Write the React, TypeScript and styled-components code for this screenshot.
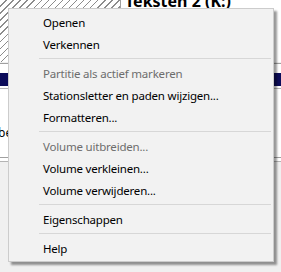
import React from 'react';
import styled, { createGlobalStyle } from 'styled-components';

const GlobalStyle = createGlobalStyle`
  html, body {
    margin: 0;
    padding: 0;
    background: #f0f0f0;
  }
  body {
    font-family: 'Noto Sans', 'Open Sans', sans-serif;
  }
`;

type Entry = { label: string; disabled?: boolean } | 'sep';

const ENTRIES: Entry[] = [
  { label: 'Openen' },
  { label: 'Verkennen' },
  'sep',
  { label: 'Partitie als actief markeren', disabled: true },
  { label: 'Stationsletter en paden wijzigen...' },
  { label: 'Formatteren...' },
  'sep',
  { label: 'Volume uitbreiden...', disabled: true },
  { label: 'Volume verkleinen...' },
  { label: 'Volume verwijderen...' },
  'sep',
  { label: 'Eigenschappen' },
  'sep',
  { label: 'Help' },
];

export default function App() {
  return (
    <>
      <GlobalStyle />
      <Screen>
        <DiskView>
          <TopRow>
            <Unallocated />
            <VolumeLabel>Teksten 2 (K:)</VolumeLabel>
          </TopRow>
          <PartitionBox>
            <PartitionHead>
              <NavyBar />
            </PartitionHead>
            <PartitionBody>
              <ClippedText>be</ClippedText>
            </PartitionBody>
          </PartitionBox>
          <BottomRule />
        </DiskView>

        <Menu>
          {ENTRIES.map((e, idx) =>
            e === 'sep' ? (
              <Separator key={idx} />
            ) : (
              <Item key={idx} disabled={e.disabled}>
                {e.label}
              </Item>
            )
          )}
        </Menu>
      </Screen>
    </>
  );
}

const Screen = styled.div`
  position: relative;
  width: 281px;
  height: 272px;
  overflow: hidden;
  background: #f0f0f0;
`;

const DiskView = styled.div`
  display: flex;
  flex-direction: column;
`;

const TopRow = styled.div`
  display: flex;
  height: 62px;
  background: #ffffff;
`;

const Unallocated = styled.div`
  width: 120px;
  border-right: 1px solid #a0a0a0;
  background: repeating-linear-gradient(
    135deg,
    #ffffff 0px,
    #ffffff 4px,
    #8c8c8c 4px,
    #8c8c8c 5px
  );
`;

const VolumeLabel = styled.div`
  flex: 1;
  padding-left: 4px;
  margin-top: -6px;
  font-family: 'Noto Sans', sans-serif;
  font-weight: bold;
  font-size: 16px;
  line-height: 15px;
  color: #000;
`;

const PartitionBox = styled.div`
  display: flex;
  flex-direction: column;
  border-top: 1px solid #a0a0a0;
  border-bottom: 1px solid #a0a0a0;
  margin-top: 1px;
  background: #ffffff;
`;

const PartitionHead = styled.div`
  padding: 9px 0 2px;
  border-bottom: 1px solid #b4b4b4;
`;

const NavyBar = styled.div`
  height: 13px;
  background: #0c0c5a;
`;

const PartitionBody = styled.div`
  height: 68px;
  display: flex;
  align-items: center;
`;

const BottomRule = styled.div`
  height: 3px;
  border-bottom: 1px solid #b4b4b4;
  background: #ffffff;
`;

const ClippedText = styled.span`
  margin-left: -2px;
  margin-top: 18px;
  font-size: 12px;
  color: #000;
`;

const Menu = styled.div`
  position: absolute;
  top: 8px;
  left: 8px;
  width: 264px;
  padding: 2px 0;
  display: flex;
  flex-direction: column;
  background: #f2f2f2;
  border: 1px solid #cccccc;
  box-shadow: 3px 3px 2px rgba(0, 0, 0, 0.4);
`;

const Item = styled.div<{ disabled?: boolean }>`
  height: 22px;
  display: flex;
  align-items: center;
  padding-left: 34px;
  font-family: 'Noto Sans', sans-serif;
  font-size: 11.5px;
  letter-spacing: -0.2px;
  color: ${(p) => (p.disabled ? '#6d6d6d' : '#000000')};
  white-space: nowrap;
`;

const Separator = styled.div`
  height: 7px;
  margin: 0 2px 0 30px;
  display: flex;
  align-items: center;

  &::after {
    content: '';
    flex: 1;
    height: 1px;
    background: #d7d7d7;
  }
`;
